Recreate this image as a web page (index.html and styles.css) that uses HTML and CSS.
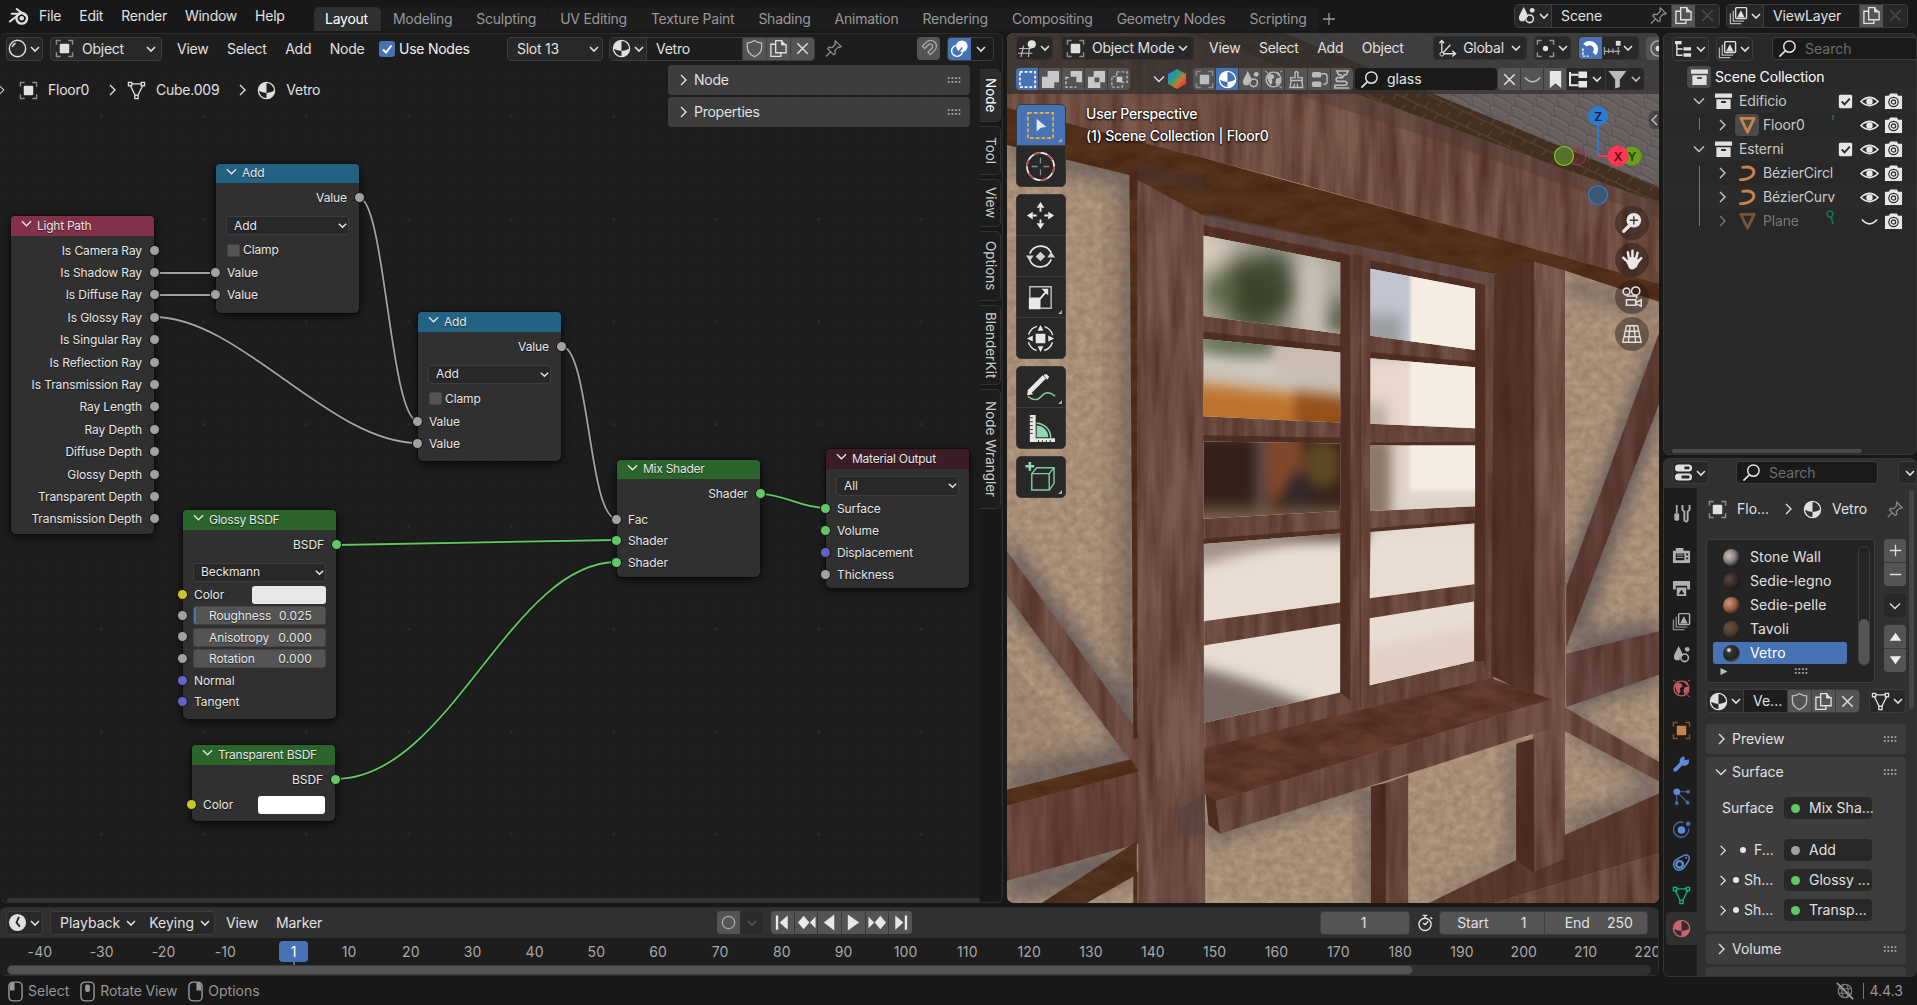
FILE: index.html
```html
<!DOCTYPE html>
<html lang="en">
<head>
<meta charset="utf-8">
<title>Blender</title>
<link rel="stylesheet" href="styles.css">
</head>
<body>
<svg class="defs" width="0" height="0">
  <symbol id="down" viewBox="0 0 12 12"><path d="M2 4l4 4 4-4" fill="none" stroke="currentColor" stroke-width="1.6"/></symbol>
  <symbol id="right" viewBox="0 0 12 12"><path d="M4 1l5 5-5 5" fill="none" stroke="currentColor" stroke-width="1.4"/></symbol>
  <symbol id="expand" viewBox="0 0 12 12"><path d="M1 3.500l5 5 5-5" fill="none" stroke="currentColor" stroke-width="1.4"/></symbol>
  <symbol id="obj" viewBox="0 0 20 20"><path d="M1.500 6V1.500H6M14 1.500h4.500V6M18.500 14v4.500H14M6 18.500H1.500V14" fill="none" stroke="currentColor" stroke-width="1.500" opacity=".55"/><rect x="5" y="5" width="10" height="10" rx="1" fill="currentColor"/></symbol>
  <symbol id="mat" viewBox="0 0 20 20"><circle cx="10" cy="10" r="8.500" fill="none" stroke="currentColor" stroke-width="1.400"/><path d="M10 1.500A8.500 8.500 0 0 0 1.500 10q4 2.500 8.500 2.500zM10 12.500q4.500 0 8.500-2.500A8.500 8.500 0 0 1 10 18.500z" fill="currentColor"/></symbol>
  <symbol id="mesh" viewBox="0 0 20 20"><g fill="none" stroke="currentColor" stroke-width="1.400"><path d="M5 3h10M3.600 5l4.900 10M16.400 5l-4.900 10"/><rect x="1.500" y="1.500" width="3.500" height="3.500"/><rect x="15" y="1.500" width="3.500" height="3.500"/><rect x="8.200" y="15" width="3.500" height="3.500"/></g></symbol>
  <symbol id="sphere" viewBox="0 0 20 20"><circle cx="10" cy="10" r="8.600" fill="none" stroke="currentColor" stroke-width="1.500"/><path d="M4.500 8.500Q5.500 5.500 8 4.500" fill="none" stroke="currentColor" stroke-width="1.600"/></symbol>
  <symbol id="shield" viewBox="0 0 20 20"><path d="M10 1.500q3.500 2.500 7.500 2.500v5q0 6.500-7.500 9.500Q2.500 15.500 2.500 9V4Q6.500 4 10 1.500z" fill="none" stroke="currentColor" stroke-width="1.400" opacity=".75"/></symbol>
  <symbol id="copy" viewBox="0 0 20 20"><path d="M6.500 5.500H2v12.800h10.500V15" fill="none" stroke="currentColor" stroke-width="1.400"/><path d="M7 1.700h6.500V6H18v8.500H7z" fill="none" stroke="currentColor" stroke-width="1.400"/><path d="M13 1l5.500 5.500H13z" fill="currentColor"/></symbol>
  <symbol id="x" viewBox="0 0 20 20"><path d="M4.500 4.500l11 11M15.500 4.500l-11 11" stroke="currentColor" stroke-width="1.500"/></symbol>
  <symbol id="pin" viewBox="0 0 20 20"><path d="M12 2l6 6-2 1-1-.5-3.500 3.500.3 3.500-1.800 1L4 10.500l1-1.800 3.500.3L12 5.500 11.500 4zM7 13.500l-5 5" fill="none" stroke="currentColor" stroke-width="1.400"/></symbol>
  <symbol id="magnet" viewBox="0 0 20 20"><path d="M3.500 7.500L8 3.200a6 6 0 0 1 8.700 8.500L12 16.500l-2.500-2.500 4.500-4.800a2.600 2.600 0 0 0-3.700-3.500L6 10z" fill="none" stroke="currentColor" stroke-width="1.400"/></symbol>
  <symbol id="snap" viewBox="0 0 20 20"><path d="M4 6.500A6.500 6.500 0 1 1 14 15.500" fill="none" stroke="currentColor" stroke-width="4.500"/><path d="M2 10v8h6" fill="none" stroke="currentColor" stroke-width="1.500" stroke-dasharray="2.500 1.500"/></symbol>
  <symbol id="overlay" viewBox="0 0 20 20"><circle cx="12.500" cy="7.500" r="6" fill="currentColor"/><circle cx="7.500" cy="12.500" r="5.800" fill="none" stroke="currentColor" stroke-width="1.500"/><path d="M8 15l5-6" stroke="#4772b3" stroke-width="1.500"/></symbol>
  <symbol id="search" viewBox="0 0 20 20"><circle cx="12" cy="8" r="6" fill="none" stroke="currentColor" stroke-width="1.600"/><path d="M7.600 12.400L1.500 18.500" stroke="currentColor" stroke-width="1.800"/></symbol>
  <symbol id="scene" viewBox="0 0 20 20"><path d="M7 1q4 7 4.500 10.500A4.500 4.500 0 0 0 8 16H4q-3-1.500-1.500-6z" fill="currentColor"/><circle cx="13.300" cy="13.500" r="4" fill="none" stroke="currentColor" stroke-width="1.600"/><circle cx="16" cy="4.500" r="2.500" fill="currentColor"/></symbol>
  <symbol id="layers" viewBox="0 0 20 20"><path d="M4.500 5v11H16M1.500 8v10.500H13" fill="none" stroke="currentColor" stroke-width="1.400" opacity=".75"/><rect x="7" y="1.700" width="11.500" height="11.500" rx="1" fill="none" stroke="currentColor" stroke-width="1.500"/><path d="M8.500 12l4-7.500 4 7.500z" fill="currentColor"/></symbol>
  <symbol id="world" viewBox="0 0 20 20"><circle cx="10" cy="10" r="7.800" fill="none" stroke="currentColor" stroke-width="1.500"/><path d="M3 7l3-3 4 1 1 3-3 2 1 3-2 3-2-3zM13 9l4-1v5l-4 3-1-3zM13 3l2-1 2 3-2 1z" fill="currentColor"/><path d="M1 1l3 2M19 19l-3-2M17 2l2-1" stroke="currentColor"/></symbol>
  <symbol id="brush" viewBox="0 0 20 20"><path d="M8.500 8V2.500q1.500-2 3 0V8h4.500v3H4V8zM4.500 11L3 18.500h13.500L15.800 11M7 18l1-3.500M11 18v-3.500" fill="none" stroke="currentColor" stroke-width="1.500"/></symbol>
  <symbol id="nodes" viewBox="0 0 20 20"><rect x="2" y="2" width="10" height="6" rx="2" fill="currentColor"/><rect x="2" y="12" width="10" height="6" rx="2" fill="currentColor"/><path d="M12 4h3q3 0 3 3v5q0 3-4 3" fill="none" stroke="currentColor" stroke-width="1.500"/></symbol>
  <symbol id="printer3d" viewBox="0 0 20 20"><path d="M4 1h12l-2 4h-2l-2 3-2-3H6zM10 8H5q-3 1-1 4h9q4 2 0 4H2v3h15" fill="none" stroke="currentColor" stroke-width="1.700"/></symbol>
  <symbol id="coll" viewBox="0 0 20 20"><path d="M1 1.500h18V6H1zM2.500 7.500h15V18h-15zM7.500 9.500v2.200h5V9.500z" fill="currentColor" fill-rule="evenodd"/></symbol>
  <symbol id="eye" viewBox="0 0 20 20"><path d="M1 10Q10 1.500 19 10 10 18.500 1 10z" fill="none" stroke="currentColor" stroke-width="1.800"/><circle cx="10" cy="10" r="3.400" fill="currentColor"/></symbol>
  <symbol id="shut" viewBox="0 0 20 20"><path d="M2 8q8 9 16 0" fill="none" stroke="currentColor" stroke-width="1.600"/></symbol>
  <symbol id="cam" viewBox="0 0 20 20"><path d="M1 4H5l1.500-2.500h7L15 4h4v14H1z" fill="currentColor"/><circle cx="10" cy="10.500" r="4.900" fill="none" stroke="#282828" stroke-width="1.300"/><circle cx="10" cy="10.500" r="2.200" fill="none" stroke="#282828" stroke-width="1.200"/></symbol>
  <symbol id="check" viewBox="0 0 20 20"><rect x="3" y="3" width="14" height="14" rx="1.500" fill="currentColor"/><path d="M6 10l3 3 5.500-6" fill="none" stroke="#282828" stroke-width="1.900"/></symbol>
  <symbol id="tri" viewBox="0 0 20 20"><path d="M3 2.500h14L10 17z" fill="none" stroke="currentColor" stroke-width="3" stroke-linejoin="round"/></symbol>
  <symbol id="curve" viewBox="0 0 20 20"><path d="M5 3.500c16-3 16 13-2.500 13" fill="none" stroke="currentColor" stroke-width="3" stroke-linecap="round"/></symbol>
  <symbol id="tree" viewBox="0 0 20 20"><path d="M3 3v13h6M3 9.500h6" fill="none" stroke="currentColor" stroke-width="1.500"/><path d="M1 1h7v3.500H1zM10 7.500h8V11h-8zM10 14h8v3.500h-8z" fill="currentColor"/></symbol>
  <symbol id="hier" viewBox="0 0 20 20"><path d="M1 2v14h9M1 5h9" fill="none" stroke="currentColor" stroke-width="2.200"/><path d="M10 1.500h9v7h-9zM10 11.500h9v7h-9z" fill="currentColor"/></symbol>
  <symbol id="filter" viewBox="0 0 20 20"><path d="M.5 1h19l-7 9v8l-5 1.500V10z" fill="currentColor"/></symbol>
  <symbol id="mark" viewBox="0 0 20 20"><path d="M4 1h12v18l-6-5-6 5z" fill="currentColor"/></symbol>
  <symbol id="axes" viewBox="0 0 20 20"><path d="M4 2v13.500h14M1.500 4.500L4 1.500l2.500 3M15 12.500l3.500 3-3.500 3M4 16L13 6" fill="none" stroke="currentColor" stroke-width="1.400"/><circle cx="4" cy="16" r="2" fill="#282828" stroke="currentColor"/></symbol>
  <symbol id="pivot" viewBox="0 0 20 20"><path d="M1.500 6V1.500H6M14 1.500h4.500V6M18.500 14v4.500H14M6 18.500H1.500V14" fill="none" stroke="currentColor" stroke-width="1.500" opacity=".6"/><circle cx="10" cy="10" r="2.800" fill="currentColor"/></symbol>
  <symbol id="grid3d" viewBox="0 0 20 20"><path d="M1 10h13M0 15h15M6 7L3 19M12 9l-1 10" stroke="currentColor" stroke-width="1.300" opacity=".8"/><circle cx="14.500" cy="5.500" r="4.300" fill="currentColor"/></symbol>
  <symbol id="incr" viewBox="0 0 20 20"><path d="M1 13h17M1.500 8.500v8M6 10v5M10.500 10v5M16 8.500v8" stroke="currentColor" stroke-width="1.300" opacity=".7"/><rect x="13.500" y="2" width="5" height="5" fill="currentColor"/></symbol>
  <symbol id="clock" viewBox="0 0 20 20"><circle cx="10" cy="10" r="9" fill="currentColor"/><path d="M11.500 4L9 10l3.500 4.500" fill="none" stroke="#282828" stroke-width="2"/></symbol>
  <symbol id="props" viewBox="0 0 20 20"><rect x="1" y="1.500" width="18" height="7.500" rx="3.700" fill="currentColor"/><rect x="1" y="11" width="18" height="7.500" rx="3.700" fill="currentColor"/><path d="M11 3.700h5q1 1.500 0 3h-5zM8 13.200h8q1 1.500 0 3H8z" fill="#282828"/></symbol>
  <symbol id="tools" viewBox="0 0 20 20"><path d="M5 1v9" stroke="currentColor" stroke-width="1.800"/><path d="M2.500 10h5v6q-2.500 4-5 0z" fill="currentColor"/><path d="M11 1v5l2 2v9q1.700 3 3.500 0V8l2-2V1" fill="none" stroke="currentColor" stroke-width="2"/></symbol>
  <symbol id="render" viewBox="0 0 20 20"><path d="M1 5h3V2h8v3h7v13H1zM4 8v7h9V8zM15 8v2h2V8zM15 12v2h2v-2z" fill="currentColor" fill-rule="evenodd"/><path d="M5 9.500h7M5 12h7" stroke="currentColor"/></symbol>
  <symbol id="output" viewBox="0 0 20 20"><path d="M1 2h18v9h-3V7H4v4H1zM5 9h10v9H5zM7 16h6l-3-5z" fill="currentColor" fill-rule="evenodd"/></symbol>
  <symbol id="wrench" viewBox="0 0 20 20"><path d="M3.500 16.500L11 9" stroke="currentColor" stroke-width="4" stroke-linecap="round"/><path d="M17.500 5.500l-4 1-.5-4A5 5 0 1 0 18 8z" fill="currentColor"/></symbol>
  <symbol id="part" viewBox="0 0 20 20"><path d="M5 5h12M5 5v12M5 5l11 11" stroke="currentColor" stroke-width="1.200" opacity=".7"/><g fill="currentColor"><circle cx="5" cy="5" r="3.500"/><circle cx="17" cy="5" r="2" opacity=".7"/><circle cx="5" cy="17" r="2" opacity=".7"/><circle cx="16.500" cy="16.500" r="2" opacity=".7"/></g></symbol>
  <symbol id="phys" viewBox="0 0 20 20"><path d="M12 2.500A8 8 0 1 0 17.500 9" fill="none" stroke="currentColor" stroke-width="1.400" opacity=".7"/><circle cx="10" cy="10.500" r="4" fill="currentColor"/><circle cx="17" cy="4" r="2.500" fill="currentColor" opacity=".7"/></symbol>
  <symbol id="cons" viewBox="0 0 20 20"><path d="M3 8Q7 5 14 2q5 0 4 5-2 4-5 8-4 5-9 2-4-4-1-9z" fill="none" stroke="currentColor" stroke-width="1.500"/><circle cx="8" cy="12" r="3.500" fill="none" stroke="currentColor" stroke-width="2.500"/><circle cx="15" cy="5" r="1" fill="currentColor"/></symbol>
  <symbol id="dots" viewBox="0 0 18 8"><path d="M1 1h2v2H1zM5 1h2v2H5zM9 1h2v2H9zM13 1h2v2h-2zM1 5h2v2H1zM5 5h2v2H5zM9 5h2v2H9zM13 5h2v2h-2z" fill="#a8a8a8"/></symbol>
</svg>
<div class="app">
  <header class="topbar">
    <svg class="logo" viewBox="0 0 24 20"><path d="M2 16L13 7.500H4M9.500 2.500L20 10" fill="none" stroke="#e0e0e0" stroke-width="2.200" stroke-linecap="round"/><circle cx="15" cy="12.500" r="5.800" fill="none" stroke="#e0e0e0" stroke-width="2.600"/><circle cx="15" cy="12.500" r="2.500" fill="#e0e0e0"/></svg>
    <nav class="menus"><span>File</span><span>Edit</span><span>Render</span><span>Window</span><span>Help</span></nav>
    <nav class="tabs"><span class="on">Layout</span><span>Modeling</span><span>Sculpting</span><span>UV Editing</span><span>Texture Paint</span><span>Shading</span><span>Animation</span><span>Rendering</span><span>Compositing</span><span>Geometry Nodes</span><span>Scripting</span><svg class="plus" viewBox="0 0 12 12"><path d="M6 0v12M0 6h12" stroke="#999" stroke-width="1.300"/></svg></nav>
    <div class="idb scene"><b class="pick"><svg><use href="#scene"/></svg><svg class="dn"><use href="#down"/></svg></b><span class="name">Scene</span><svg class="dim"><use href="#pin"/></svg><b class="btn"><svg><use href="#copy"/></svg></b><b class="off"><svg><use href="#x"/></svg></b></div>
    <div class="idb layer"><b class="pick"><svg><use href="#layers"/></svg><svg class="dn"><use href="#down"/></svg></b><span class="name">ViewLayer</span><b class="btn"><svg><use href="#copy"/></svg></b><b class="off"><svg><use href="#x"/></svg></b></div>
  </header>

  <div class="work">
    <main class="left">
      <div class="editors">
        <section class="nodeed">
          <div class="nhead">
            <div class="dd ed"><svg><use href="#sphere"/></svg><svg class="dn"><use href="#down"/></svg></div>
            <div class="dd objsel"><svg><use href="#obj"/></svg><span>Object</span><svg class="dn"><use href="#down"/></svg></div>
            <nav class="menus"><span>View</span><span>Select</span><span>Add</span><span>Node</span></nav>
            <i class="cb"><svg viewBox="0 0 14 14"><path d="M3 7.500l3 3 5.500-7" fill="none" stroke="#fff" stroke-width="2"/></svg></i><span class="use">Use Nodes</span>
            <div class="dd slot"><span>Slot 13</span><svg class="dn"><use href="#down"/></svg></div>
            <div class="idb vet"><b class="pick"><svg><use href="#mat"/></svg><svg class="dn"><use href="#down"/></svg></b><span class="name">Vetro</span><b class="btn"><svg><use href="#shield"/></svg></b><b class="btn"><svg><use href="#copy"/></svg></b><b class="btn"><svg><use href="#x"/></svg></b></div>
            <svg class="dim hpin"><use href="#pin"/></svg>
            <b class="mag"><svg><use href="#magnet"/></svg></b>
            <div class="ovl"><b><svg><use href="#overlay"/></svg></b><svg class="dn"><use href="#down"/></svg></div>
          </div>
          <div class="canvas">
            <div class="path"><svg class="dn a0"><use href="#right"/></svg><svg><use href="#obj"/></svg><span>Floor0</span><svg class="sep"><use href="#right"/></svg><svg><use href="#mesh"/></svg><span>Cube.009</span><svg class="sep"><use href="#right"/></svg><svg><use href="#mat"/></svg><span>Vetro</span></div>
            <svg class="links" viewBox="0 0 1003 838"><g fill="none" stroke="#111" stroke-width="4" opacity=".5"><path d="M154 208H216M154 230H216M154 252C240 252 330 378 418 378M359 133C385 133 390 356 418 356M561 281C590 281 588 454 617 454M337 480L617 475M335 714C450 714 510 497 617 497M760 429C785 429 800 443 826 443"/></g><g fill="none" stroke="#a1a1a1" stroke-width="1.800"><path d="M154 208H216M154 230H216M154 252C240 252 330 378 418 378M359 133C385 133 390 356 418 356M561 281C590 281 588 454 617 454"/></g><g fill="none" stroke="#5fc95f" stroke-width="1.800"><path d="M337 480L617 475M335 714C450 714 510 497 617 497M760 429C785 429 800 443 826 443"/></g></svg>
            <article class="node lp"><h3 class="red"><svg><use href="#expand"/></svg>Light Path</h3>
              <p class="o">Is Camera Ray<i></i></p><p class="o">Is Shadow Ray<i></i></p><p class="o">Is Diffuse Ray<i></i></p><p class="o">Is Glossy Ray<i></i></p><p class="o">Is Singular Ray<i></i></p><p class="o">Is Reflection Ray<i></i></p><p class="o">Is Transmission Ray<i></i></p><p class="o">Ray Length<i></i></p><p class="o">Ray Depth<i></i></p><p class="o">Diffuse Depth<i></i></p><p class="o">Glossy Depth<i></i></p><p class="o">Transparent Depth<i></i></p><p class="o">Transmission Depth<i></i></p></article>
            <article class="node add1"><h3 class="blue"><svg><use href="#expand"/></svg>Add</h3><p class="o tall">Value<i></i></p><div class="sel">Add<svg><use href="#down"/></svg></div><div class="clamp"><u></u>Clamp</div><p>Value<i></i></p><p>Value<i></i></p></article>
            <article class="node add2"><h3 class="blue"><svg><use href="#expand"/></svg>Add</h3><p class="o tall">Value<i></i></p><div class="sel">Add<svg><use href="#down"/></svg></div><div class="clamp"><u></u>Clamp</div><p>Value<i></i></p><p>Value<i></i></p></article>
            <article class="node glossy"><h3 class="green"><svg><use href="#expand"/></svg>Glossy BSDF</h3><p class="o tall">BSDF<i class="g"></i></p><div class="sel">Beckmann<svg><use href="#down"/></svg></div><p class="c">Color<s></s><i class="y"></i></p><p class="n r"><em>Roughness<span>0.025</span></em><i></i></p><p class="n"><em>Anisotropy<span>0.000</span></em><i></i></p><p class="n"><em>Rotation<span>0.000</span></em><i></i></p><p>Normal<i class="v"></i></p><p>Tangent<i class="v"></i></p></article>
            <article class="node transp"><h3 class="green"><svg><use href="#expand"/></svg>Transparent BSDF</h3><p class="o tall">BSDF<i class="g"></i></p><p class="c">Color<s class="w"></s><i class="y"></i></p></article>
            <article class="node mix"><h3 class="green"><svg><use href="#expand"/></svg>Mix Shader</h3><p class="o tall">Shader<i class="g"></i></p><p>Fac<i></i></p><p>Shader<i class="g"></i></p><p>Shader<i class="g"></i></p></article>
            <article class="node out"><h3 class="wine"><svg><use href="#expand"/></svg>Material Output</h3><div class="sel">All<svg><use href="#down"/></svg></div><p>Surface<i class="g"></i></p><p>Volume<i class="g"></i></p><p>Displacement<i class="v"></i></p><p>Thickness<i></i></p></article>
            <aside class="npanel"><div><svg class="sep"><use href="#right"/></svg>Node<svg class="dots"><use href="#dots"/></svg></div><div><svg class="sep"><use href="#right"/></svg>Properties<svg class="dots"><use href="#dots"/></svg></div></aside>
            <nav class="vtabs"><span class="on t1">Node</span><span class="t2">Tool</span><span class="t3">View</span><span class="t4">Options</span><span class="t5">BlenderKit</span><span class="t6">Node Wrangler</span></nav>
            <div class="hscroll"></div>
          </div>
        </section>

        <section class="view3d">
          <svg class="photo" viewBox="16.4 -109 1525.6 1663.6" preserveAspectRatio="none">
            <defs>
              <filter id="wood" x="-2%" y="-2%" width="104%" height="104%" color-interpolation-filters="sRGB"><feTurbulence type="fractalNoise" baseFrequency=".035 .0045" numOctaves="4" seed="4"/><feColorMatrix values="0 0 0 0 .26  0 0 0 0 .12  0 0 0 0 .08  1.050 0 0 0 -.27"/><feComposite in2="SourceAlpha" operator="in" result="n"/><feMerge><feMergeNode in="SourceGraphic"/><feMergeNode in="n"/></feMerge></filter>
              <filter id="burl" x="-2%" y="-2%" width="104%" height="104%" color-interpolation-filters="sRGB"><feTurbulence type="fractalNoise" baseFrequency=".012 .04" numOctaves="4" seed="9"/><feColorMatrix values="0 0 0 0 .22  0 0 0 0 .1  0 0 0 0 .05  .9 0 0 0 -.25"/><feComposite in2="SourceAlpha" operator="in" result="n"/><feMerge><feMergeNode in="SourceGraphic"/><feMergeNode in="n"/></feMerge></filter>
              <filter id="wall" x="0" y="0" width="100%" height="100%" color-interpolation-filters="sRGB"><feTurbulence type="fractalNoise" baseFrequency=".05 .07" numOctaves="5" seed="8"/><feColorMatrix values="0 0 0 0 .4  0 0 0 0 .3  0 0 0 0 .23  .5 0 0 0 -.07"/><feComposite in2="SourceAlpha" operator="in" result="n"/><feMerge><feMergeNode in="SourceGraphic"/><feMergeNode in="n"/></feMerge></filter>
              <filter id="b8" color-interpolation-filters="sRGB"><feGaussianBlur stdDeviation="13"/></filter>
              <filter id="b18" x="-40%" y="-40%" width="180%" height="180%" color-interpolation-filters="sRGB"><feGaussianBlur stdDeviation="20"/></filter>
              <pattern id="tiles" width="46" height="20" patternUnits="userSpaceOnUse" patternTransform="rotate(24)"><rect width="46" height="20" fill="#67605f"/><path d="M0 20Q22 12 46 18M0 0L12 18" stroke="#504b50" stroke-width="1.800" fill="none"/><path d="M2 3Q24 -1 46 1" stroke="#777071" stroke-width="1.500" fill="none"/></pattern>
              <pattern id="bricks" width="52" height="26" patternUnits="userSpaceOnUse" patternTransform="rotate(21)"><rect width="52" height="26" fill="#422f22"/><path d="M0 13H52M10 0L4 13M38 13L32 26" stroke="#5e4c3c" stroke-width="1.800"/></pattern>
              <clipPath id="panes"><path d="M476 278L796 330V466L476 432zM476 476L796 502V636L476 624zM476 672L796 676V805L476 820zM477 868L796 848V980L477 1016zM477 1062L796 1020V1152L477 1210zM867 342L1112 380V497L867 470zM867 513L1112 530V647L867 638zM867 680H1112V796L867 805zM867 845L1110 829V945L865 972zM865 1010L1109 978V1092L865 1138z"/></clipPath>
            </defs>
            <rect x="16" y="-109" width="1527" height="1664" fill="#b89d84" filter="url(#wall)"/>
            <g fill="#4a4650" filter="url(#b18)" opacity=".68"><path d="M16 90L310 140V185L16 130zM290 145H320V1240L290 1270zM16 850L330 1200V1300L16 985zM16 1300L300 1250V1300L16 1350zM16 1500L310 1440V1510L16 1550zM480 1400L860 1320V1345L480 1440zM850 1330H880V1555H850zM1190 1250H1215V1480L1000 1555 970 1560 1190 1470zM1322 360L1542 400V425L1322 385zM1542 440L1315 940V1080H1350L1542 630zM1320 1050L1542 1010V1135L1320 1190zM1320 1190L1542 1300V1340L1320 1220zM1315 1400L1542 1330V1370L1320 1430z"/></g>
            <path d="M238 190H305V1130L238 1060zM16 1080L220 1290 16 1300zM825 1340H868V1555H825z" fill="#6d5748" opacity=".15"/>
            <g filter="url(#wood)">
              <path d="M16 -109H1542V370L1076 264 672 172 476 130 157 63 16 34z" fill="#7c5a4e"/>
              <path d="M16 882L330 1235V1310L16 965z" fill="#75544a"/>
              <path d="M16 1338L310 1280 330 1320 330 1440 16 1512z" fill="#704d44"/>
              <path d="M322 135L476 165 480 1555H324z" fill="#795a50"/>
              <path d="M476 235L840 300 1155 352V1130L480 1260z" fill="#735248"/>
              <path d="M1250 325L1322 340V1470L1246 1497z" fill="#7d5d52"/>
              <path d="M1542 465V600L1325 1065V950z" fill="#62433a"/>
              <path d="M1325 1078L1542 1035V1118L1325 1180z" fill="#6c4e46"/>
              <path d="M1320 1180L1542 1285V1322L1320 1225z" fill="#745448"/>
              <path d="M1320 1425L1542 1345V1460L1150 1556H1000L1210 1472 1250 1495 1320 1470z" fill="#624136"/>
              <path d="M1542 1460V1556H1150z" fill="#745449"/>
              <path d="M505 1360L1290 1165V1220L515 1422z" fill="#735247"/>
              <path d="M903 1325L955 1310V1555H903z" fill="#735246"/>
              <path d="M1155 352L1250 325V1160L1150 1120z" fill="#57372c"/>
              <path d="M1208 1250L1250 1240V1497L1208 1472zM868 1332L903 1325V1555H868zM480 1335L505 1358 515 1422 488 1405z" fill="#503026"/>
            </g>
            <g filter="url(#burl)">
              <path d="M16 34L157 63 476 130 1076 264 1542 370V405L1322 345 1250 328 1155 352 476 240 300 162 16 105z" fill="#58341c"/>
              <path d="M16 1338L305 1280 325 1303 16 1368z" fill="#5b371f"/>
              <path d="M95 1556L320 1437V1500L200 1556z" fill="#563620"/>
              <path d="M303 160L322 135 322 1240H312z" fill="#56321f"/>
              <path d="M312 1495H322V1555H312z" fill="#56321f"/>
              <path d="M478 1258L1150 1125 1290 1165 505 1360 478 1345z" fill="#653e2f"/>
            </g>
            <path d="M322 135L476 165V195L322 175zM418 1375L480 1345V1425H418z" fill="#463844" opacity=".28"/>
            <path d="M796 326L820 318V1168L796 1152zM1112 376L1134 372V1092H1112zM476 258L820 316 796 330 476 278zM867 325L1134 372 1112 381 867 343zM476 462L796 490V502L476 476zM476 660L796 665V676L476 672zM476 858L796 839V848L476 868zM867 501L1112 520V530L867 513zM867 674L1112 672V680H867zM867 838L1110 822V829L867 845z" fill="#46261c" opacity=".72"/>
            <path d="M843 310V1180M1134 372V1100" stroke="#4a2c24" stroke-width="4" opacity=".6"/>
            <path d="M476 235L840 298 1155 352 1155 378 1134 368 820 312 476 256z" fill="#5b4a4c" opacity=".55"/>
            <g clip-path="url(#panes)">
              <rect x="470" y="270" width="660" height="960" fill="#e9ddd3"/>
              <g filter="url(#b18)"><rect x="450" y="240" width="390" height="240" fill="#a8a395"/><ellipse cx="600" cy="385" rx="88" ry="66" fill="#3a4329"/><ellipse cx="640" cy="345" rx="40" ry="38" fill="#414b34"/><ellipse cx="520" cy="385" rx="40" ry="35" fill="#5c6646"/><ellipse cx="570" cy="485" rx="130" ry="28" fill="#55654a"/><ellipse cx="730" cy="400" rx="34" ry="100" fill="#cbc3ba"/><ellipse cx="795" cy="440" rx="24" ry="45" fill="#4c5144"/><path d="M440 255L560 290 500 345H440z" fill="#d8ccbc"/></g>
              <g filter="url(#b8)"><path d="M440 515L840 560V590L440 552z" fill="#c8c1b6"/><path d="M640 470H850V562L640 538z" fill="#cbbcb1"/><path d="M430 556L850 594V660H430z" fill="#be742f"/><path d="M690 575L850 590V660H690z" fill="#96501a"/><path d="M420 655H860V860H420z" fill="#35211a"/><path d="M620 660H710V740L625 800z" fill="#7f482a"/><path d="M596 660H622V800H596z" fill="#5a4845"/><ellipse cx="755" cy="715" rx="42" ry="46" fill="#5e4825"/><ellipse cx="700" cy="765" rx="30" ry="34" fill="#33282a"/><path d="M420 800H860V850H420z" fill="#745c47"/></g>
              <g filter="url(#b8)"><path d="M820 300H990V512H820z" fill="#c0c5cf"/><path d="M820 430H940V500H820z" fill="#9a9fa0"/><path d="M820 515H965V670H820z" fill="#ead6cb"/><path d="M820 600H905V670H820z" fill="#bcb1a4"/><path d="M820 665H915V830H820z" fill="#8d7968"/><path d="M920 665H950V830H920z" fill="#dccdc1"/><path d="M925 775H1170V830H925z" fill="#ddd3c8"/></g>
              <path d="M960 340H1160V765H960z" fill="#f5ede3" filter="url(#soft)"/>
              <g filter="url(#b8)"><path d="M440 835H800L440 915z" fill="#a39286"/><path d="M440 1098Q600 1130 740 1180L440 1260z" fill="#776962"/><path d="M850 1070L1140 1020V1150H850z" fill="#e2d0c4"/></g>
            </g>
            <path d="M665 -109H1542V185L1030 13z" fill="url(#tiles)"/>
            <path d="M440 -109H665L1030 13 1542 185V216L1030 65z" fill="url(#bricks)"/>
            <path d="M440 -109L1030 65 1542 216V245L1030 98 380 -75z" fill="#493835" opacity=".35"/>
            <filter id="soft"><feGaussianBlur stdDeviation="4"/></filter>
          </svg>
          <div class="vhead">
            <div class="vrow">
              <div class="dd ed"><svg><use href="#grid3d"/></svg><svg class="dn"><use href="#down"/></svg></div>
              <div class="dd mode"><svg><use href="#obj"/></svg><span>Object Mode</span><svg class="dn"><use href="#down"/></svg></div>
              <nav class="menus"><span>View</span><span>Select</span><span>Add</span><span>Object</span></nav>
              <div class="dd glob"><svg><use href="#axes"/></svg><span>Global</span><svg class="dn"><use href="#down"/></svg></div>
              <div class="dd ed pv"><svg><use href="#pivot"/></svg><svg class="dn"><use href="#down"/></svg></div>
              <div class="dd snapb"><b><svg><use href="#snap"/></svg></b><svg><use href="#incr"/></svg><svg class="dn"><use href="#down"/></svg></div>
              <b class="prop"><svg viewBox="0 0 20 20"><circle cx="10" cy="10" r="8" fill="none" stroke="#aaa" stroke-width="1.500"/><circle cx="10" cy="10" r="3" fill="#ddd"/></svg></b>
            </div>
            <div class="vrow two">
              <div class="grp selm"><b class="on"><svg viewBox="0 0 20 20"><rect x="2" y="2" width="16" height="16" fill="none" stroke="#fff" stroke-width="1.700" stroke-dasharray="3 2"/></svg></b><b><svg viewBox="0 0 20 20"><path d="M7 1h12v12h-5v6H1V7h6z" fill="#c8c8c8"/></svg></b><b><svg viewBox="0 0 20 20"><path d="M7 1h12v12h-6V7H7z" fill="#c8c8c8"/><path d="M2 7v11h11M2 8h4" fill="none" stroke="#c8c8c8" stroke-width="1.500" stroke-dasharray="3 2"/></svg></b><b><svg viewBox="0 0 20 20"><path d="M7 1h12v12h-5v6H1V7h6zM8 8v5h5V8z" fill="#c8c8c8" fill-rule="evenodd"/></svg></b><b><svg viewBox="0 0 20 20"><path d="M7 2h11v11h-5v5H2V7h5z" fill="none" stroke="#b0b0b0" stroke-width="1.500" stroke-dasharray="3 2"/><path d="M7 7h6v6H7z" fill="#c8c8c8"/></svg></b></div>
              <svg class="dn bk"><use href="#expand"/></svg>
              <i class="hex"></i>
              <div class="grp kit"><b><svg><use href="#obj"/></svg></b><b class="on"><svg><use href="#mat"/></svg></b><b><svg><use href="#scene"/></svg></b><b><svg><use href="#world"/></svg></b><b><svg><use href="#brush"/></svg></b><b><svg><use href="#nodes"/></svg></b><b><svg><use href="#printer3d"/></svg></b></div>
              <div class="srch glass"><svg><use href="#search"/></svg><span>glass</span></div>
              <div class="grp tail"><b class="wh"><svg><use href="#x"/></svg></b><b><svg><use href="#shut"/></svg></b><b class="wh"><svg><use href="#mark"/></svg></b><b class="wide wh"><svg><use href="#hier"/></svg><svg class="dn"><use href="#down"/></svg></b><b class="wide"><svg><use href="#filter"/></svg><svg class="dn"><use href="#down"/></svg></b></div>
            </div>
          </div>
          <div class="info">User Perspective<br>(1) Scene Collection | Floor0</div>
          <div class="toolbar">
            <div><b class="on"><svg viewBox="0 0 32 32"><rect x="3" y="3" width="26" height="26" fill="none" stroke="#f5b13d" stroke-width="1.700" stroke-dasharray="4 2"/><path d="M12 9l10 8.500-5 .5-5 4z" fill="#e8e8e8"/></svg><i></i></b><b><svg viewBox="0 0 32 32"><circle cx="16" cy="16" r="14" fill="none" stroke="#eee" stroke-width="1.800"/><circle cx="16" cy="16" r="14" fill="none" stroke="#b5484f" stroke-width="1.900" stroke-dasharray="7.300 7.300"/><path d="M16 7v6M16 19v6M7 16h6M19 16h6" stroke="#888" stroke-width="1.300"/></svg></b></div>
            <div><b><svg viewBox="0 0 32 32"><path d="M16 2l4 6h-8zM16 30l4-6h-8zM2 16l6-4v8zM30 16l-6-4v8z" fill="#e8e8e8"/><path d="M16 8v4M16 20v4M8 16h4M20 16h4" stroke="#e8e8e8" stroke-width="2"/></svg></b><b><svg viewBox="0 0 32 32"><path d="M5 13a12 12 0 0 1 22-1M27 19a12 12 0 0 1-22 1" fill="none" stroke="#e8e8e8" stroke-width="1.700"/><path d="M1 15h8l-4 6zM23 17h8l-4-6zM16 11l5 5-5 5-5-5z" fill="#d0d0d0"/></svg></b><b><svg viewBox="0 0 32 32"><path d="M5 16V5h22v22H16" fill="none" stroke="#bbb" stroke-width="1.500"/><path d="M4 16h12v12H4zM24 7v7l-7-7z" fill="#e8e8e8"/><path d="M15 18l7-8" stroke="#e8e8e8" stroke-width="2"/></svg><i></i></b><b><svg viewBox="0 0 32 32"><circle cx="16" cy="16" r="13" fill="none" stroke="#e8e8e8" stroke-width="1.500" stroke-dasharray="12.400 8" stroke-dashoffset="-4"/><path d="M11 11h10v10H11zM16 2l3 6h-6zM16 30l3-6h-6zM2 16l6-3v6zM30 16l-6-3v6z" fill="#e8e8e8"/></svg></b></div>
            <div><b><svg viewBox="0 0 32 32"><path d="M4 21L20 5" stroke="#e8e8e8" stroke-width="5"/><path d="M2 24l1.500-6 5 5zM19 3l3-1 3 3-2 3z" fill="#e8e8e8"/><path d="M3 25q8 7 14 0t14 0" fill="none" stroke="#7fcba2" stroke-width="1.500"/></svg><i></i></b><b><svg viewBox="0 0 32 32"><path d="M5 2h6v24h20v4H5z" fill="#e8e8e8"/><path d="M12 13a12 12 0 0 1 12 12H12z" fill="#8fd9b1"/><path d="M12 10.500a15 15 0 0 1 14.500 15" fill="none" stroke="#8fd9b1" stroke-width="1.500"/><path d="M5 5h3M5 9h3M5 13h3M5 17h3M5 21h3M14 30v-2M18 30v-2M22 30v-2M26 30v-2" stroke="#282828"/></svg></b></div>
            <div><b><svg viewBox="0 0 32 32"><path d="M7 12h18v17H7zM7 12l5-6h18v16l-5 7M25 12l5-6" fill="none" stroke="#7fcba2" stroke-width="1.500"/><path d="M5 0v9M.5 4.500h9" stroke="#8fd9b1" stroke-width="2.600"/></svg><i></i></b></div>
          </div>
          <svg class="gizmo" viewBox="0 0 90 110"><path d="M45 11V56" stroke="#2f7bd2" stroke-width="2"/><path d="M45 56H65" stroke="#fb3550" stroke-width="2"/><circle cx="24" cy="56" r="9" fill="#8a2a3c44" stroke="#9d4053"/><circle cx="11" cy="56" r="9.500" fill="#56702e" stroke="#83c516" stroke-width="1.200"/><circle cx="79" cy="56" r="9.500" fill="#68a01b"/><circle cx="65" cy="56" r="10.500" fill="#ff3653"/><circle cx="45" cy="16" r="10" fill="#2f7bd2"/><circle cx="45" cy="95" r="9.500" fill="#3c5774" stroke="#2f7bd2" stroke-width="1.200"/><g font-family="Inter, sans-serif" font-weight="600" font-size="12" text-anchor="middle"><text x="45" y="20.500" fill="#0c2038">Z</text><text x="65" y="60.500" fill="#4a1019">X</text><text x="79" y="60.500" fill="#23370a">Y</text></g></svg>
          <div class="flap"><svg viewBox="0 0 8 12"><path d="M7 1L2 6l5 5" fill="none" stroke="#ccc" stroke-width="1.200"/></svg></div>
          <div class="nav3d">
            <b><svg viewBox="0 0 24 24"><circle cx="14" cy="9" r="8" fill="#e8e8e8"/><path d="M3 21l6-6" stroke="#e8e8e8" stroke-width="3.500" stroke-linecap="round"/><path d="M14 4.500v9M9.500 9h9" stroke="#47332d" stroke-width="1.500"/></svg></b>
            <b><svg viewBox="0 0 24 24"><path d="M5 12L2.500 9.500M8.500 10L7.500 3.500M12.500 10V2M16.500 10.500L18 4M18.500 14l3.500-4" stroke="#e8e8e8" stroke-width="2.700" stroke-linecap="round"/><path d="M4 11l4 1V9h9v2l4 1-4 8q-4 4-8 1z" fill="#e8e8e8"/></svg></b>
            <b><svg viewBox="0 0 24 24"><g fill="none" stroke="#e0e0e0" stroke-width="1.700"><circle cx="6" cy="6" r="3.700"/><circle cx="16" cy="5.500" r="4.500"/><path d="M6 11h11v3M6 15h10v6H6zM16 18l6-3v7l-6-3"/></g></svg></b>
            <b><svg viewBox="0 0 24 24"><path d="M6 3h12l4 18H2zM4.700 9h14.600M3.500 15h17M10 3L8 21M14 3l2 18" fill="none" stroke="#e0e0e0" stroke-width="1.500"/></svg></b>
          </div>
        </section>
      </div>

      <section class="timeline">
        <div class="thead">
          <div class="dd ed"><svg><use href="#clock"/></svg><svg class="dn"><use href="#down"/></svg></div>
          <div class="dd pk"><span>Playback</span><svg class="dn"><use href="#down"/></svg><u></u><span>Keying</span><svg class="dn"><use href="#down"/></svg></div>
          <nav class="menus"><span>View</span><span>Marker</span></nav>
          <div class="rec"><b><svg viewBox="0 0 20 20"><circle cx="10" cy="10" r="6.500" fill="none" stroke="#aaa" stroke-width="1.400"/></svg></b><svg class="dn"><use href="#down"/></svg></div>
          <div class="grp play"><b><svg viewBox="0 0 20 20"><path d="M3 2.500h2.500v15H3zM15.500 2.500v15L7 10z" fill="#e8e8e8"/></svg></b><b><svg viewBox="0 0 20 20"><path d="M7 3l6 7-6 7-6-7zM19.500 4v12l-6-6z" fill="#e8e8e8"/></svg></b><b><svg viewBox="0 0 20 20"><path d="M15 1.500v17L4 10z" fill="#e8e8e8"/></svg></b><b><svg viewBox="0 0 20 20"><path d="M4 1.500v17L16 10z" fill="#e8e8e8"/></svg></b><b><svg viewBox="0 0 20 20"><path d="M13 3l6 7-6 7-6-7zM.5 4v12l6-6z" fill="#e8e8e8"/></svg></b><b><svg viewBox="0 0 20 20"><path d="M17 2.500h-2.500v15H17zM4.500 2.500v15L13 10z" fill="#e8e8e8"/></svg></b></div>
          <div class="num cur">1</div>
          <svg class="stopw" viewBox="0 0 20 20"><circle cx="10" cy="11.500" r="6.800" fill="none" stroke="#e0e0e0" stroke-width="1.500"/><path d="M7.500 1.500h5M10 2v3M10 12l3.500-4M10 12L8 10M16 3.500l2 2" stroke="#e0e0e0" stroke-width="1.600"/></svg>
          <div class="num range"><span>Start</span><span class="v1">1</span><u></u><span class="e">End</span><span class="v2">250</span></div>
        </div>
        <div class="ruler"><span>-40</span><span>-30</span><span>-20</span><span>-10</span><span></span><span>10</span><span>20</span><span>30</span><span>40</span><span>50</span><span>60</span><span>70</span><span>80</span><span>90</span><span>100</span><span>110</span><span>120</span><span>130</span><span>140</span><span>150</span><span>160</span><span>170</span><span>180</span><span>190</span><span>200</span><span>210</span><span>220</span></div>
        <div class="tscroll"><i></i></div>
        <div class="frame">1</div>
      </section>
    </main>

    <aside class="side">
      <section class="outliner">
        <div class="ohead"><div class="dd ed"><svg><use href="#tree"/></svg><svg class="dn"><use href="#down"/></svg></div><div class="dd ed"><svg><use href="#layers"/></svg><svg class="dn"><use href="#down"/></svg></div><div class="srch"><svg><use href="#search"/></svg><span>Search</span></div></div>
        <ul class="tree">
          <li class="l0"><q><svg><use href="#coll"/></svg></q><span>Scene Collection</span></li>
          <li class="l1"><svg class="ar"><use href="#expand"/></svg><q><svg><use href="#coll"/></svg></q><span>Edificio</span><em><svg><use href="#check"/></svg><svg><use href="#eye"/></svg><svg><use href="#cam"/></svg></em></li>
          <li class="l2"><svg class="ar"><use href="#right"/></svg><q class="hl or"><svg><use href="#tri"/></svg></q><span>Floor0</span><em><svg><use href="#eye"/></svg><svg><use href="#cam"/></svg></em></li>
          <li class="l1"><svg class="ar"><use href="#expand"/></svg><q><svg><use href="#coll"/></svg></q><span>Esterni</span><em><svg><use href="#check"/></svg><svg><use href="#eye"/></svg><svg><use href="#cam"/></svg></em></li>
          <li class="l2"><svg class="ar"><use href="#right"/></svg><q class="or"><svg><use href="#curve"/></svg></q><span>BézierCircl</span><em><svg><use href="#eye"/></svg><svg><use href="#cam"/></svg></em></li>
          <li class="l2"><svg class="ar"><use href="#right"/></svg><q class="or"><svg><use href="#curve"/></svg></q><span>BézierCurv</span><em><svg><use href="#eye"/></svg><svg><use href="#cam"/></svg></em></li>
          <li class="l2 hid"><svg class="ar"><use href="#right"/></svg><q class="or"><svg><use href="#tri"/></svg></q><span>Plane</span><em><svg><use href="#shut"/></svg><svg><use href="#cam"/></svg></em></li>
        </ul>
        <svg class="treelines" viewBox="0 0 160 190"><path d="M35.500 29v12M35.500 77v60" stroke="#777"/><path d="M169 26v5" stroke="#0fa47c"/><path d="M166 122a3 3 0 1 0 .1 0M167 127l2 8" fill="none" stroke="#0e7d60" stroke-width="1.500"/></svg>
        <div class="oscroll"></div>
      </section>
      <section class="props">
        <div class="phead"><div class="dd ed"><svg><use href="#props"/></svg><svg class="dn"><use href="#down"/></svg></div><div class="srch"><svg><use href="#search"/></svg><span>Search</span></div><div class="dd more"><svg class="dn"><use href="#down"/></svg></div></div>
        <div class="pmain">
          <nav class="ptabs"><b class="p1"><svg><use href="#tools"/></svg></b><b class="p2"><svg><use href="#render"/></svg></b><b><svg><use href="#output"/></svg></b><b><svg><use href="#layers"/></svg></b><b><svg><use href="#scene"/></svg></b><b class="rd"><svg><use href="#world"/></svg></b><b class="p3 or"><svg><use href="#obj"/></svg></b><b class="bl"><svg><use href="#wrench"/></svg></b><b class="bl"><svg><use href="#part"/></svg></b><b class="bl"><svg><use href="#phys"/></svg></b><b class="bl"><svg><use href="#cons"/></svg></b><b class="gr"><svg><use href="#mesh"/></svg></b><b class="rd on"><svg><use href="#mat"/></svg></b></nav>
          <div class="pbody">
            <div class="ctx"><svg><use href="#obj"/></svg><span>Flo...</span><svg class="sep"><use href="#right"/></svg><svg><use href="#mat"/></svg><span class="cv">Vetro</span><svg class="dim"><use href="#pin"/></svg></div>
            <div class="slots">
              <div class="list">
                <ul><li><i class="s1"></i>Stone Wall</li><li><i class="s2"></i>Sedie-legno</li><li><i class="s3"></i>Sedie-pelle</li><li><i class="s4"></i>Tavoli</li><li class="on"><i class="s5"></i>Vetro</li></ul>
                <div class="lsb"><i></i></div>
                <div class="foot"><svg class="play1" viewBox="0 0 8 8"><path d="M0 0l8 4-8 4z" fill="#bbb"/></svg><svg class="dots"><use href="#dots"/></svg></div>
              </div>
              <div class="sbt"><div><b><svg viewBox="0 0 20 20"><path d="M10 4v12M4 10h12" stroke="#ddd" stroke-width="1.400"/></svg></b><b><svg viewBox="0 0 20 20"><path d="M4 10h12" stroke="#ddd" stroke-width="1.400"/></svg></b></div><div class="dark"><b><svg class="dn"><use href="#expand"/></svg></b></div><div><b><svg viewBox="0 0 20 20"><path d="M4 14.500h12L10 6z" fill="#eee"/></svg></b><b><svg viewBox="0 0 20 20"><path d="M4 5.500h12L10 14z" fill="#eee"/></svg></b></div></div>
            </div>
            <div class="idrow"><div class="idb"><b class="pick"><svg><use href="#mat"/></svg><svg class="dn"><use href="#down"/></svg></b><span class="name">Ve...</span><b class="btn"><svg><use href="#shield"/></svg></b><b class="btn"><svg><use href="#copy"/></svg></b><b class="btn"><svg><use href="#x"/></svg></b></div><div class="dd ed"><svg><use href="#mesh"/></svg><svg class="dn"><use href="#down"/></svg></div></div>
            <div class="panel"><h4><svg><use href="#right"/></svg>Preview<svg class="dots"><use href="#dots"/></svg></h4></div>
            <div class="panel surf"><h4><svg><use href="#expand"/></svg>Surface<svg class="dots"><use href="#dots"/></svg></h4>
              <p class="first"><span>Surface</span><b><i></i>Mix Sha...</b></p>
              <p><svg><use href="#right"/></svg><u class="in"></u><span>F...</span><b><i class="gy"></i>Add</b></p>
              <p><svg><use href="#right"/></svg><u></u><span>Sh...</span><b><i></i>Glossy ...</b></p>
              <p><svg><use href="#right"/></svg><u></u><span>Sh...</span><b><i></i>Transp...</b></p></div>
            <div class="panel"><h4><svg><use href="#right"/></svg>Volume<svg class="dots"><use href="#dots"/></svg></h4></div>
            <div class="panel last"><h4><svg><use href="#expand"/></svg>Displacement</h4></div>
          </div>
          <div class="pscroll"></div>
        </div>
      </section>
    </aside>
  </div>

  <footer class="status">
    <svg class="ms" viewBox="0 0 16 22"><rect x="1" y="1" width="14" height="20" rx="4.500" fill="none" stroke="#999" stroke-width="1.500"/><path d="M2 10V5q0-4 5-4v9z" fill="#999"/></svg><span>Select</span>
    <svg class="ms m2" viewBox="0 0 16 22"><rect x="1" y="1" width="14" height="20" rx="4.500" fill="none" stroke="#999" stroke-width="1.500"/><rect x="5.500" y="3.500" width="5" height="8" rx="2" fill="#999"/></svg><span>Rotate View</span>
    <svg class="ms m3" viewBox="0 0 16 22"><rect x="1" y="1" width="14" height="20" rx="4.500" fill="none" stroke="#999" stroke-width="1.500"/><path d="M14 10V5q0-4-5-4v9z" fill="#999"/></svg><span>Options</span>
    <svg class="net" viewBox="0 0 20 20"><g fill="none" stroke="#808080" stroke-width="1.300"><circle cx="10" cy="10" r="7.500"/><ellipse cx="10" cy="10" rx="3.500" ry="7.500"/><path d="M3 7.500h14M3 12.500h14"/></g><path d="M1 1l18 18" stroke="#999" stroke-width="2"/></svg><u></u><span>4.4.3</span>
  </footer>
</div>
</body>
</html>
```
FILE: styles.css
```css
* { box-sizing: border-box; }
body { margin: 0; background: #181818; color: #e0e0e0; font: 14px/20px Inter, "Noto Sans", sans-serif; letter-spacing: -.25px; overflow: hidden; }
b, i, u, em, s, q { font-style: normal; font-weight: 400; text-decoration: none; }
q::before, q::after { content: none; }
h3, h4, p, ul { margin: 0; padding: 0; font-weight: 400; font-size: inherit; list-style: none; }
svg { width: 19px; height: 19px; flex: none; display: block; }
.defs { position: absolute; width: 0; height: 0; }
svg.dn { width: 12px; height: 12px; }
svg.sep { width: 12px; height: 12px; }
svg.dots { width: 16px; height: 8px; }
.dim { color: #8a8a8a; }
.app { width: 1917px; height: 1005px; display: grid; grid-template-rows: 33px 944px 28px; overflow: hidden; }
.work { display: grid; grid-template-columns: 1659px 254px; column-gap: 4px; min-width: 0; min-height: 0; }
.left { display: grid; grid-template-rows: 870px 69px; row-gap: 4px; min-width: 0; align-content: start; }
.editors { display: grid; grid-template-columns: 1003px 652px; column-gap: 4px; }
.menus { display: flex; gap: 18.500px; white-space: nowrap; flex: none; }

.topbar { display: flex; align-items: center; padding: 0 0 2px 8px; min-width: 0; }
.logo { width: 22px; height: 20px; margin-right: 9px; }
.topbar .menus { width: 247px; gap: 18px; }
.topbar .tabs { display: flex; flex: none; align-self: flex-end; height: 24px; margin-left: 28px; white-space: nowrap; width: 1200px; color: #989898; }
.tabs span { padding: 2px 12px 0; background: #1d1d1d; border-radius: 5px 5px 0 0; }
.tabs .on { background: #303030; color: #fff; padding-left: 11px; padding-right: 13px; }
.tabs .plus { width: 12px; height: 12px; margin: 6px 12px 6px 4px; }
.idb { display: flex; align-items: center; height: 24px; border: 1px solid #3d3d3d; border-radius: 4px; background: #1d1d1d; overflow: hidden; color: #e0e0e0; }
.idb .pick { width: 37px; height: 22px; background: #282828; border-right: 1px solid #3d3d3d; display: flex; align-items: center; justify-content: center; gap: 2px; flex: none; }
.idb .name { flex: 1; padding-left: 9px; }
.idb .btn { width: 24px; height: 22px; background: #545454; border-left: 1px solid #3d3d3d; display: grid; place-items: center; flex: none; }
.idb .off { width: 24px; height: 22px; background: #282828; color: #4d4d4d; display: grid; place-items: center; flex: none; }
.topbar .scene { width: 206px; flex: none; }
.scene .dim { margin-right: 3px; }
.layer { width: 182px; margin-left: 6px; flex: none; }
.topbar .idb { letter-spacing: -.1px; }

.dd { display: flex; align-items: center; height: 24px; border: 1px solid #3d3d3d; border-radius: 4px; background: #282828; flex: none; }
.dd.ed { width: 37px; justify-content: center; gap: 2px; }

.nodeed { position: relative; background: #1d1d1d; border-radius: 6px; border: 1px solid #2c2c2c; border-left: 0; overflow: hidden; }
.nhead { display: flex; align-items: center; height: 31px; padding: 0 8px 2px 6px; }
.nhead .objsel { width: 112px; margin-left: 7px; padding: 0 4px; }
.objsel span { margin-left: 8px; flex: 1; }
.nhead .menus { margin-left: 15px; width: 202px; }
.cb { width: 16px; height: 16px; background: #4772b3; border-radius: 3px; margin-right: 4px; flex: none; }
.cb svg { width: 14px; height: 14px; margin: 1px; }
.use { width: 108px; color: #f0f0f0; flex: none; }
.slot { width: 96px; padding: 0 2px 0 9px; justify-content: space-between; }
.vet { width: 206px; margin-left: 6px; flex: none; }
.hpin { margin-left: 9px; }
.mag { margin-left: 74px; width: 23px; height: 23px; border-radius: 4px; background: #545454; display: grid; place-items: center; color: #aaa; flex: none; }
.ovl { margin-left: 7px; width: 47px; height: 24px; display: flex; align-items: center; justify-content: space-between; padding-right: 6px; border: 1px solid #3d3d3d; border-radius: 4px; background: #1d1d1d; flex: none; }
.ovl b, .snapb b { width: 23px; height: 22px; background: #4772b3; border-radius: 3px 0 0 3px; display: grid; place-items: center; color: #fff; }
.canvas { position: relative; height: 838px; margin-top: -1px; background-image: radial-gradient(circle, #2b2b2b 1.200px, transparent 1.500px), radial-gradient(circle, #222 .8px, transparent 1.200px); background-size: 102.500px 102.500px, 20.500px 20.500px; background-position: 255px 104px, 9.500px 1px; }
.links { position: absolute; left: 0; top: 1px; width: 1003px; height: 838px; }
.path { position: absolute; left: -3px; top: 16px; display: flex; align-items: center; height: 20px; }
.path .a0 { width: 9px; margin-right: 13px; }
.path span { margin-left: 10px; }
.path .sep { margin: 0 9px 0 17px; }
.node { position: absolute; background: #303030; border-radius: 5px; box-shadow: 0 2px 8px 1px rgba(0,0,0,.65), 0 0 0 1px #161616; font-size: 12px; letter-spacing: -.1px; line-height: 16px; text-shadow: 0 1px 1px #0008; color: #e6e6e6; }
.node h3 { height: 19.500px; display: flex; align-items: center; gap: 5px; padding-left: 10px; border-radius: 4px 4px 0 0; letter-spacing: -.25px; }
.node h3 svg { width: 11px; height: 11px; margin-top: -4px; }
.red { background: #83314a; } .blue { background: #246283; } .green { background: #2b652b; } .wine { background: #3c1d26; }
.node p { position: relative; height: 22px; display: flex; align-items: center; padding: 0 12px 0 11px; }
.node p.o { justify-content: flex-end; }
.node p.tall { height: 30px; }
.node p i { position: absolute; left: -5px; top: calc(50% - 5px); width: 9px; height: 9px; border-radius: 50%; background: #a1a1a1; box-shadow: 0 0 0 1px #1a1a1a; }
.node p.o i { left: auto; right: -5px; }
.node p i.g { background: #63c763; } .node p i.y { background: #c7c729; } .node p i.v { background: #6363c7; }
.sel { height: 19px; margin: 3px 10px; display: flex; align-items: center; justify-content: space-between; padding: 0 0 0 7px; background: #282828; border: 1px solid #3d3d3d; border-radius: 3px; }
.sel svg { width: 11px; height: 11px; }
.clamp { height: 24px; display: flex; align-items: center; padding-left: 11px; gap: 3px; }
.clamp u { width: 13px; height: 13px; background: #545454; border-radius: 2px; border: 1px solid #444; }
.lp { left: 11px; top: 152px; width: 143px; height: 318px; }
.lp p { height: 22.400px; }
.lp p:nth-of-type(1) { margin-top: 4px; }
.add1 { left: 216px; top: 99.500px; width: 143px; height: 149px; }
.add2 { left: 418px; top: 248px; width: 143px; height: 149px; }
.glossy { left: 183px; top: 446px; width: 153px; height: 209px; }
.glossy .c { height: 20.500px; } .glossy p:last-child { height: 21px; }
.node s { margin-left: auto; margin-right: -2px; width: 74px; height: 18px; border-radius: 3px; background: #e7e7e7; }
.node s.w { width: 67px; background: #fff; }
.node p.n { padding: 0 10px; height: 21.500px; }
.n em { display: flex; justify-content: space-between; width: 100%; height: 19px; padding: 1px 13px 0 15px; background: #545454; border: 1px solid #464646; border-radius: 3px; }
.n em span { letter-spacing: .1px; }
.n.r em { box-shadow: inset 2px 0 #4772b3; }
.transp { left: 192px; top: 681px; width: 143px; height: 75.500px; }
.transp .c { height: 20px; }
.mix { left: 617px; top: 395.500px; width: 143px; height: 117px; }
.mix p:nth-of-type(2) { height: 21px; }
.out { left: 826px; top: 385px; width: 143px; height: 139px; }
.out .sel { margin: 7px 10px 2px; height: 20px; }
.npanel { position: absolute; left: 668px; top: 1px; width: 302px; display: grid; gap: 2px; }
.npanel div { height: 30px; background: #3d3d3d; border-radius: 4px; display: flex; align-items: center; padding: 0 7px 0 9px; gap: 5px; }
.npanel .dots { margin-left: auto; }
.vtabs { position: absolute; right: 1px; top: 5px; width: 21px; height: 832px; background: #181818; display: flex; flex-direction: column; gap: 4px; }
.vtabs span { writing-mode: vertical-rl; display: flex; align-items: center; justify-content: center; width: 21px; padding-left: 2px; border: 1px solid #333; border-left: 0; border-radius: 0 5px 5px 0; background: #1d1d1d; color: #ccc; font-size: 13.500px; letter-spacing: 0; }
.vtabs .on { background: #2c2c2c; color: #fff; }
.t1 { height: 53px; } .t2 { height: 49px; } .t3 { height: 48px; } .t4 { height: 70px; } .t5 { height: 80px; } .t6 { height: 120px; }
.hscroll { position: absolute; left: 7px; right: 22px; bottom: 0; height: 4px; border-radius: 2px; background: #353535; }

.view3d { position: relative; border-radius: 7px; overflow: hidden; background: #6b4a40; }
.photo { position: absolute; inset: 0; width: 652px; height: 870px; }
.vhead { position: relative; height: 61px; background: rgba(48,48,48,.72); }
.vrow { display: flex; align-items: center; height: 24px; padding: 0 0 0 9px; position: relative; top: 3px; width: 652px; overflow: hidden; }
.vrow.two { margin-top: 7px; }
.vrow .dd { border-color: #33302f; }
.mode { width: 133px; margin-left: 8px; padding: 0 4px; }
.mode span { margin-left: 7px; flex: 1; }
.vrow .menus { margin-left: 15px; width: 224px; }
.glob { width: 94px; padding: 0 4px; justify-content: space-between; }
.pv { margin-left: 7px; }
.snapb { width: 61px; margin-left: 7px; justify-content: space-between; padding-right: 4px; }
.prop { margin-left: 7px; width: 24px; height: 23px; border-radius: 4px; background: #545454; display: grid; place-items: center; flex: none; }
.grp { display: flex; border-radius: 4px; overflow: hidden; height: 22px; gap: 1px; background: #3a3a3a; flex: none; }
.grp b { width: 22px; background: #545454; display: grid; place-items: center; color: #bbb; }
.grp b.on { background: #4772b3; color: #fff; }
.grp b.wh { color: #e6e6e6; }
.grp b.wide { width: 38px; background: #282828; display: flex; align-items: center; justify-content: center; gap: 3px; }
.bk { margin-left: 23px; }
.hex { width: 18px; height: 20px; margin: 0 7px 0 3px; background: linear-gradient(130deg, #28c 15%, #2b9e78 40%, #c87a37 62%, #e33 85%); clip-path: polygon(50% 0,100% 25%,100% 75%,50% 100%,0 75%,0 25%); flex: none; }
.srch { display: flex; align-items: center; gap: 8px; height: 23px; padding-left: 5px; background: #1a1a1a; border: 1px solid #3d3d3d; border-radius: 4px; letter-spacing: 0; }
.srch span { color: #6e6e6e; }
.glass { width: 142px; height: 22px; margin: 0 1px 0 2px; border: 0; flex: none; }
.glass span { color: #e6e6e6; }
.info { position: absolute; left: 79px; top: 70px; line-height: 22px; font-size: 14px; font-weight: 500; letter-spacing: -.2px; color: #fff; text-shadow: 0 0 2px #000, 0 1px 2px #000; }
.toolbar { position: absolute; left: 9px; top: 71px; width: 50px; display: grid; gap: 7px; }
.toolbar div { background: #3d3d3d; border-radius: 5px; overflow: hidden; display: grid; gap: 1px; border: 1px solid #3a3a3a; }
.toolbar b { position: relative; height: 40px; background: #282828; display: grid; place-items: center; }
.toolbar b.on { background: #4772b3; }
.toolbar svg { width: 31px; height: 31px; margin-left: -2px; }
.toolbar b i { position: absolute; right: 3px; bottom: 3px; border: 2.500px solid; border-color: transparent #aaa #aaa transparent; }
.gizmo { position: absolute; left: 546px; top: 67px; width: 90px; height: 110px; }
.flap { position: absolute; right: 0; top: 78px; width: 10px; height: 18px; background: #0004; border-radius: 5px 0 0 5px; }
.flap svg { width: 8px; height: 12px; margin: 3px 0 0 1px; }
.nav3d { position: absolute; right: 10px; top: 173px; display: grid; gap: 3px; }
.nav3d b { width: 34px; height: 34px; border-radius: 50%; background: #2014126e; display: grid; place-items: center; }
.nav3d svg { width: 22px; height: 22px; }

.timeline { position: relative; background: #1d1d1d; border-radius: 6px; overflow: hidden; border: 1px solid #2c2c2c; border-left: 0; letter-spacing: 0; }
.thead { display: flex; align-items: center; height: 30px; background: #303030; padding: 0 0 1px 6px; }
.pk { width: 165px; margin-left: 7px; padding: 0 3px 0 9px; }
.pk .dn { margin-left: 5px; }
.pk u { width: 1px; height: 22px; background: #3d3d3d; margin: 0 9px 0 3px; }
.pk span:nth-of-type(2) { margin-right: auto; }
.thead .menus { margin-left: 11px; width: 491px; gap: 18px; letter-spacing: -.1px; }
.rec { display: flex; width: 46px; height: 23px; align-items: center; background: #2b2b2b; border-radius: 4px; overflow: hidden; color: #5a5a5a; flex: none; }
.rec b { width: 23px; height: 23px; background: #545454; display: grid; place-items: center; }
.rec .dn { margin-left: 6px; }
.play { margin-left: 8px; height: 23px; }
.play b { width: 22.700px; }
.num { height: 24px; border-radius: 4px; border: 1px solid #3d3d3d; background: #545454; line-height: 22px; flex: none; }
.cur { width: 90px; margin-left: 408px; text-align: center; padding-right: 3px; }
.stopw { margin-left: 6px; width: 18px; height: 18px; }
.range { display: flex; width: 209px; margin-left: 5px; padding-left: 17px; }
.range .v1 { margin-left: 32px; width: 23px; } .range u { width: 1px; background: #3d3d3d; } .range .e { margin-left: 20px; } .range .v2 { margin-left: 17px; }
.ruler { display: flex; height: 27px; color: #a8a8a8; margin-left: 9px; white-space: nowrap; width: 1650px; overflow: hidden; letter-spacing: .1px; }
.ruler span { flex: none; width: 61.830px; text-align: center; line-height: 28px; }
.tscroll { height: 10px; background: #303030; border-radius: 5px; margin: 0 7px; }
.tscroll i { display: block; width: 1406px; height: 10px; border-radius: 5px; background: #545454; border: 1px solid #3a3a3a; }
.frame { position: absolute; left: 279px; top: 33px; width: 29px; height: 21px; border-radius: 4px; background: #4772b3; color: #fff; text-align: center; line-height: 21px; }
.frame::after { content: ""; position: absolute; left: 14px; top: 21px; width: 1.500px; height: 3px; background: #4772b3; }

.side { display: grid; grid-template-rows: 422px 519px; row-gap: 3px; min-width: 0; letter-spacing: 0; }
.outliner { position: relative; background: #282828; border-radius: 6px; border: 1px solid #343434; overflow: hidden; letter-spacing: -.15px; }
.ohead { display: flex; height: 31px; padding: 3px 0 4px 8px; gap: 7px; }
.ohead .srch { margin-left: 12px; width: 150px; flex: none; }
.tree li { height: 24px; display: flex; align-items: center; position: relative; color: #c8c8c8; white-space: nowrap; }
.tree li:nth-child(even) { background: #2b2b2b; }
.tree q { width: 24px; height: 22px; display: grid; place-items: center; color: #e0e0e0; border-radius: 4px; margin-right: 4px; flex: none; }
.tree .l0 { padding-left: 23px; color: #fff; } .l0 q, .tree .hl { background: #4a4a4a; }
.l1 { padding-left: 29px; } .l2 { padding-left: 53px; }
.tree .ar { width: 12px; height: 12px; margin-right: 6px; }
.l2 .ar { margin-left: -1px; margin-right: 7px; }
.tree em { position: absolute; right: 13px; display: flex; gap: 5px; color: #e6e6e6; }
.tree em svg { width: 19px; height: 19px; }
.or, .tree .or { color: #c8834b; }
.hid > span, .hid .ar, .hid q { opacity: .5; }
.treelines { position: absolute; left: 0; top: 55px; width: 160px; height: 190px; overflow: visible; }
.oscroll { position: absolute; left: 8px; bottom: 1px; width: 190px; height: 4px; border-radius: 2px; background: #4a4a4a; }
.props { background: #303030; border-radius: 6px; border: 1px solid #343434; overflow: hidden; display: flex; flex-direction: column; }
.phead { display: flex; height: 29px; flex: none; padding: 2px 0 0 8px; }
.phead .dd, .phead .srch { height: 23px; }
.phead .srch { width: 142px; margin-left: 27px; flex: none; }
.more { width: 26px; margin-left: 20px; padding-left: 5px; }
.pmain { display: flex; flex: 1; min-height: 0; }
.ptabs { width: 33px; background: #1d1d1d; display: flex; flex-direction: column; color: #b0b0b0; flex: none; padding: 9px 0 0 2px; }
.ptabs b { height: 33.100px; display: grid; place-items: center; flex: none; }
.ptabs .p1 { margin-bottom: 9px; } .ptabs .p3 { margin-top: 9px; }
.rd { color: #c55a65; } .bl { color: #6089d6; } .gr { color: #14b385; } .ptabs .on { background: #303030; border-radius: 4px 0 0 4px; color: #d0606a; }
.pbody { width: 200px; margin-left: 9px; overflow: hidden; height: 488px; }
.ctx { display: flex; align-items: center; height: 51px; padding: 0 1px 9px 2px; }
.ctx span { margin-left: 10px; width: 40px; }
.ctx .sep { margin: 0 9px 0 5px; } .ctx .cv { margin-left: 10px; width: 49px; } .ctx .dim { margin-left: 5px; width: 18px; }
.slots { display: flex; justify-content: space-between; }
.list { width: 169px; height: 144px; background: #242424; border: 1px solid #3d3d3d; border-radius: 4px; display: grid; grid-template-columns: 141px 20px; grid-template-rows: 124px 14px; padding: 5px 0 0 6px; letter-spacing: .1px; }
.list li { height: 24px; display: flex; align-items: center; gap: 10px; padding-left: 10px; border-radius: 3px; width: 134px; white-space: nowrap; }
.list li.on { background: #4772b3; color: #fff; height: 22px; margin-top: 1px; }
.list i { width: 17px; height: 17px; border-radius: 50%; flex: none; }
.s1 { background: radial-gradient(circle at 35% 40%, #ccc4bb, #8a837d 40%, #222 75%); } .s2 { background: radial-gradient(circle at 35% 35%, #55453f, #332926 50%, #181414 80%); }
.s3 { background: radial-gradient(circle at 35% 35%, #d29a80, #95583f 45%, #22130e 80%); } .s4 { background: radial-gradient(circle at 35% 35%, #6a5443, #4a392c 50%, #1c1510 80%); }
.s5 { background: radial-gradient(circle at 35% 30%, #ddd 5%, #333 18%, #222 60%, #666 85%); }
.lsb { margin: 1px 0 0 4px; width: 12px; height: 120px; border: 1px solid #3d3d3d; border-radius: 6px; display: flex; align-items: flex-end; }
.lsb i { width: 10px; height: 46px; border-radius: 5px; background: #545454; }
.foot { display: flex; align-items: center; padding: 0 0 10px 7px; gap: 66px; }
.play1 { width: 8px; height: 7px; }
.sbt { display: grid; gap: 8px; align-content: start; }
.sbt div { width: 22px; border-radius: 4px; overflow: hidden; display: grid; gap: 1px; background: #3a3a3a; }
.sbt b { height: 23px; background: #545454; display: grid; place-items: center; }
.sbt .dark b { background: #282828; }
.idrow { display: flex; justify-content: space-between; margin: 6px 0 11px; }
.idrow .idb, .idrow .dd { height: 24px; }
.idrow .idb { width: 154px; }
.panel { background: #3d3d3d; border-radius: 4px; margin-bottom: 3px; }
.panel h4 { height: 30px; display: flex; align-items: center; padding: 0 7px 0 9px; gap: 5px; }
.panel h4 svg:first-child { width: 12px; height: 12px; }
.panel .dots { margin-left: auto; }
.surf { height: 174px; }
.surf p { display: flex; align-items: center; height: 30.200px; padding-left: 11px; white-space: nowrap; }
.surf p.first { height: 42px; padding-left: 16px; margin-bottom: 6px; }
.surf p svg { width: 11px; height: 11px; }
.surf p u { width: 6px; height: 6px; border-radius: 50%; background: #e6e6e6; margin: 0 5px 0 5px; }
.surf p u.in { margin: 0 8px 0 12px; }
.surf p span { margin-right: auto; }
.surf p b { width: 88px; height: 22px; background: #282828; border-radius: 4px; display: flex; align-items: center; gap: 9px; padding-left: 7px; margin-right: 34px; flex: none; }
.surf p b i { width: 9px; height: 9px; border-radius: 50%; background: #63c763; flex: none; }
.surf p b i.gy { background: #a1a1a1; }
.pscroll { width: 5px; height: 219px; margin: 2px 0 0 3px; border-radius: 3px; background: #454545; }

.status { display: flex; align-items: center; padding: 0 14px 0 8px; color: #979797; letter-spacing: 0; white-space: nowrap; }
.ms { width: 15px; height: 21px; margin-right: 5px; } .m2 { margin-left: 11px; } .m3 { margin-left: 12px; }
.m2 + span { width: 76px; letter-spacing: -.15px; }
.net { margin-left: auto; width: 18px; height: 18px; }
.status u { width: 1px; height: 16px; background: #777; margin: 0 6px 0 9px; }
```
